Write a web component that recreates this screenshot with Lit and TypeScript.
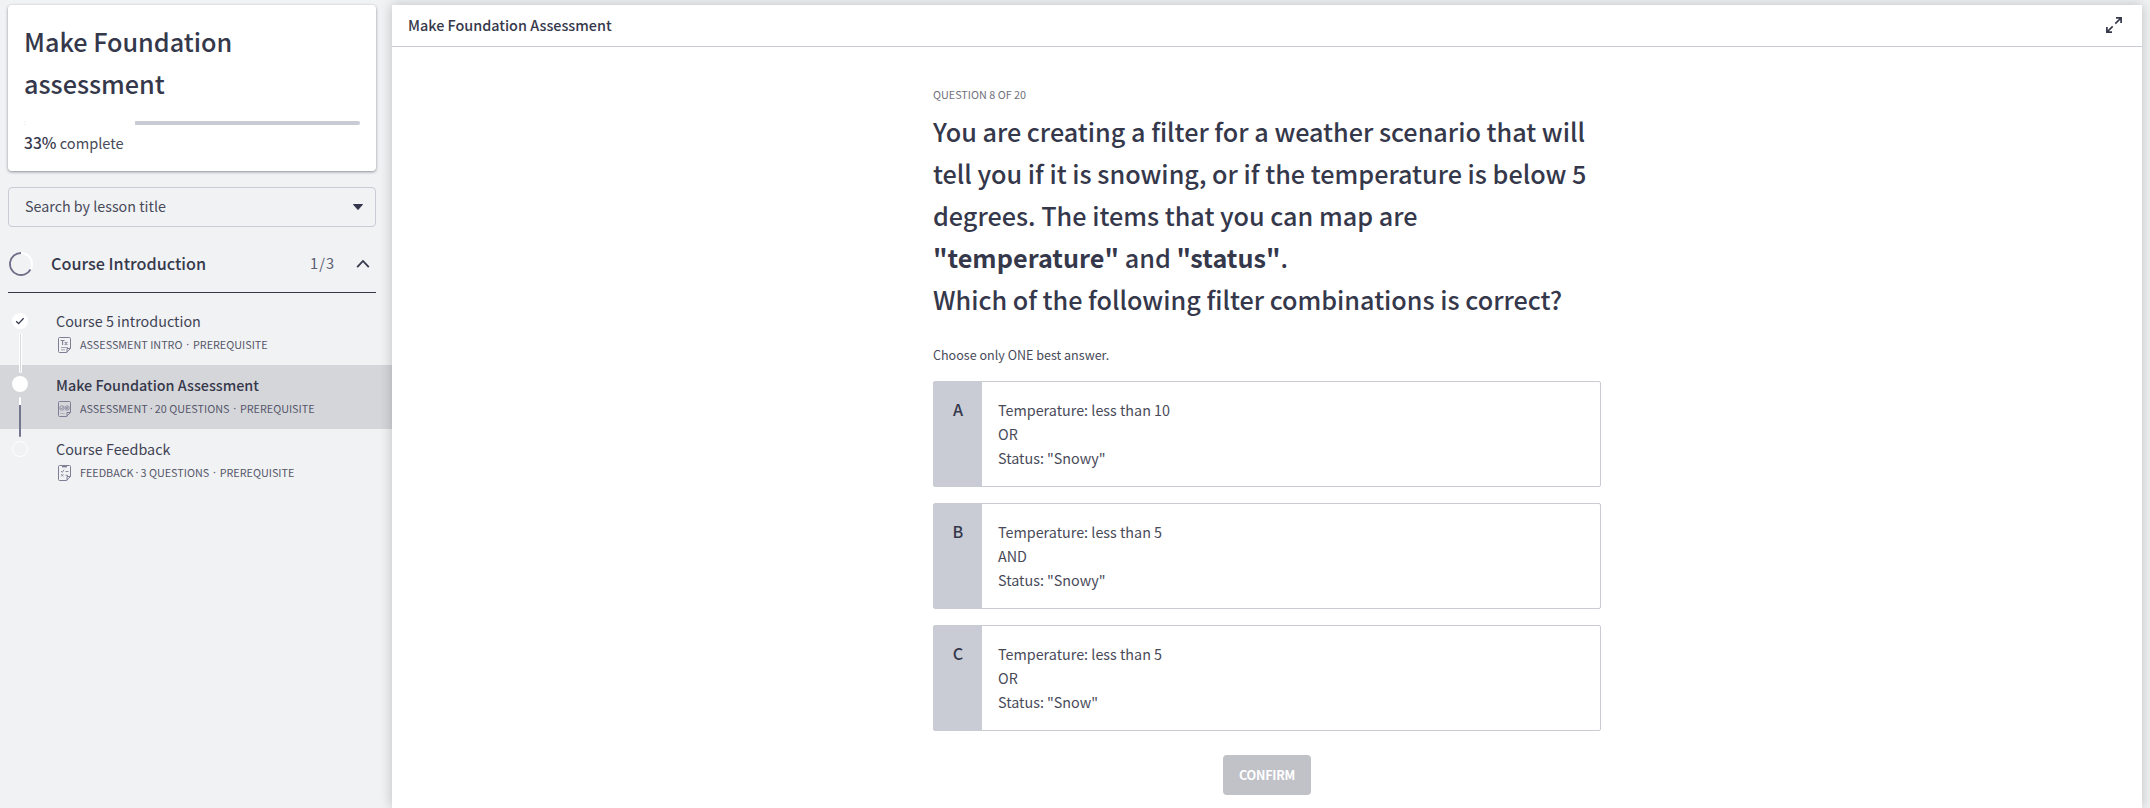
import { LitElement, html, css, svg, nothing } from "lit";
import { customElement, property } from "lit/decorators.js";

type Kind = "text" | "quiz" | "feedback";
type Status = "done" | "current" | "todo";

interface Lesson {
  title: string;
  type: string;
  count?: string;
  kind: Kind;
  status: Status;
}

const LESSONS: Lesson[] = [
  { title: "Course 5 introduction", type: "ASSESSMENT INTRO", kind: "text", status: "done" },
  { title: "Make Foundation Assessment", type: "ASSESSMENT", count: "20 QUESTIONS", kind: "quiz", status: "current" },
  { title: "Course Feedback", type: "FEEDBACK", count: "3 QUESTIONS", kind: "feedback", status: "todo" },
];

const ANSWERS = [
  { letter: "A", lines: ["Temperature: less than 10", "OR", 'Status: "Snowy"'] },
  { letter: "B", lines: ["Temperature: less than 5", "AND", 'Status: "Snowy"'] },
  { letter: "C", lines: ["Temperature: less than 5", "OR", 'Status: "Snow"'] },
];

const page = svg`<path d="M1.5 .5h10a1 1 0 0 1 1 1v10l-4 4h-7a1 1 0 0 1-1-1v-13a1 1 0 0 1 1-1z M12.5 11.5h-3.5v4"/>`;

const glyphs: Record<Kind, unknown> = {
  text: svg`${page}<path d="M2.7 3.5h3.8M4.6 3.5v4.6M6.7 5l2.7 3M9.4 5L6.7 8" stroke-width="1.1"/><path d="M3 10.5h7M3 12.8h4" opacity=".7"/>`,
  quiz: svg`${page}<g stroke-width=".8"><circle cx="3.9" cy="7" r="2.2"/><circle cx="9.1" cy="7" r="2.2"/><path d="M2.7 7l1 1 1.5-2M7.9 6l2.4 2M10.3 6L7.9 8"/></g><path d="M2.5 12.5h4" opacity=".4"/>`,
  feedback: svg`${page}<path d="M4 .2h5v2.2H4z" fill="currentColor" stroke="none"/><path d="M3 6l1.3 1.4L6 4.7M7.5 6.5h3M3.2 9.2l2.2 2.2M5.4 9.2l-2.2 2.2M7.5 10.3h2.6" stroke-width=".9"/>`,
};

@customElement("lesson-row")
class LessonRow extends LitElement {
  @property({ attribute: false }) lesson!: Lesson;

  static styles = css`
    :host { display: block; }
    .row { display: flex; height: 64px; color: #4b4d5f; }
    .row.current { background: #d5d6da; }
    .rail { position: relative; width: 56px; flex: none; padding: 12px 0 0 12px; box-sizing: border-box; }
    .current .rail { padding-top: 11px; }
    .dot { display: flex; width: 16px; height: 16px; border-radius: 50%; background: #fff; box-sizing: border-box; }
    .todo .dot { background: none; border: 1px solid #fff; }
    .link { position: absolute; left: 19px; top: 32px; width: 3px; height: 40px; z-index: 1; box-sizing: border-box; }
    .done .link { background: #d8d9dd; border: 1px solid #fff; border-radius: 1px; }
    .current .link { left: 19px; width: 2px; background: linear-gradient(#fff 8px, #73768c 8px); border-radius: 1px; }
    .title { margin-top: 10px; font-size: 14.35px; line-height: 20px; color: #404254; white-space: nowrap; }
    .current .title { font-weight: 500; color: #36384b; }
    .meta { display: flex; align-items: center; gap: 9px; margin-top: 6px; margin-left: 2px; font-size: 10.8px; line-height: 16px; white-space: nowrap; color: #55576a; }
    .meta svg { color: #7d8094; flex: none; }
    .label { display: flex; margin-top: -2px; }
    .sep { width: 10.5px; text-align: center; font-family: "Noto Sans", sans-serif; }
    .sep.tight { width: 7px; }
    .tick { margin: auto; }
  `;

  render() {
    const l = this.lesson;
    return html`<div class="row ${l.status}">
      <div class="rail">
        <div class="dot">
          ${l.status === "done"
            ? html`<svg class="tick" width="10" height="8" viewBox="0 0 10 8" fill="none" stroke="#33354c" stroke-width="1.3"><path d="M1.2 4.2l2.4 2.4 5-5.4" /></svg>`
            : nothing}
        </div>
        ${l.status === "todo" ? nothing : html`<div class="link"></div>`}
      </div>
      <div>
        <div class="title">${l.title}</div>
        <div class="meta">
          <svg width="13" height="16" viewBox="0 0 13 16" fill="none" stroke="currentColor">${glyphs[l.kind]}</svg>
          <div class="label">
            <span>${l.type}</span>
            ${l.count ? html`<span class="sep tight">·</span><span>${l.count}</span>` : nothing}
            <span class="sep">·</span><span>PREREQUISITE</span>
          </div>
        </div>
      </div>
    </div>`;
  }
}

@customElement("app-root")
class AppRoot extends LitElement {
  static styles = css`
    :host {
      display: flex;
      height: 808px;
      overflow: hidden;
      box-sizing: border-box;
      padding-top: 5px;
      padding-right: 8px;
      background: #f1f2f4;
      color: #35384b;
      font-family: "Noto Sans CJK SC", "Noto Sans", sans-serif;
    }
    .side { width: 392px; flex: none; }
    .card { margin: 0 16px 0 8px; height: 166px; box-sizing: border-box; padding: 15px 16px 0 16px; background: #fff; border-radius: 4px; box-shadow: 0 1px 3px rgba(40, 42, 55, 0.5); }
    .card h1 { margin: 0; font-size: 25.2px; line-height: 42px; font-weight: 500; }
    .bar { height: 4px; margin: 17px 0 0 0; border-radius: 2px; background: #c9cbd5; overflow: hidden; }
    .fill { height: 4px; background: #fff; }
    .done { margin-top: 6px; font-size: 14.6px; line-height: 22px; color: #484a59; }
    .done b { font-weight: 500; font-size: 15.6px; color: #35384b; }
    .search { display: flex; align-items: center; justify-content: space-between; margin: 16px 16px 0 8px; height: 40px; box-sizing: border-box; border: 1px solid #c9cbd5; border-radius: 4px; padding: 0 12px 0 16px; font-size: 14.3px; line-height: 22px; color: #484a59; }
    .search span { margin-top: -2px; }
    .section { display: flex; align-items: center; margin: 11px 16px 8px 8px; height: 55px; box-sizing: border-box; border-bottom: 1px solid #35384b; padding: 0 6px 3px 1px; }
    .section h2 { margin: -2px auto 0 18px; font-size: 16.2px; line-height: 24px; font-weight: 500; }
    .count { margin: -1px 21px 0 0; font-size: 14.6px; line-height: 24px; letter-spacing: 1px; color: #5b5d70; }
    main { flex: 1; background: #fff; box-shadow: 0 0 12px rgba(0, 0, 0, 0.22); z-index: 2; }
    header { display: flex; align-items: center; justify-content: space-between; height: 42px; box-sizing: border-box; padding: 0 20px 2px 16px; border-bottom: 1px solid #c9cbd5; font-size: 14.4px; line-height: 20px; font-weight: 500; }
    .quiz { width: 668px; margin: 0 auto; padding-top: 37px; display: flex; flex-direction: column; }
    .step { font-size: 10.8px; line-height: 20px; color: #6f717b; }
    .question { margin-top: 6px; font-size: 25.2px; line-height: 42px; font-weight: 500; white-space: nowrap; }
    .question b { font-weight: 700; letter-spacing: 0.05px; }
    .hint { margin: 25px 0 16px; font-size: 12.55px; line-height: 20px; color: #484a59; }
    .answer { display: flex; height: 106px; margin-bottom: 16px; box-sizing: border-box; border: 1px solid #c9cbd5; border-radius: 2px; }
    .letter { width: 48px; flex: none; box-sizing: border-box; padding-top: 15px; background: #c9cbd5; text-align: center; font-size: 16.2px; line-height: 24px; font-weight: 500; }
    .lines { padding: 16px; font-size: 14.35px; line-height: 24px; color: #484a59; }
    .confirm { align-self: center; margin-top: 8px; width: 88px; height: 40px; border: 0; border-radius: 4px; padding: 0; background: #c1c2c8; color: #fff; font: 700 12.6px/40px "Noto Sans CJK SC", sans-serif; letter-spacing: -0.25px; }
  `;

  render() {
    return html`
      <aside class="side">
        <div class="card">
          <h1>Make Foundation<br />assessment</h1>
          <div class="bar"><div class="fill" style="width: 33%"></div></div>
          <div class="done"><b>33%</b> complete</div>
        </div>
        <div class="search">
          <span>Search by lesson title</span>
          <svg width="10" height="6" viewBox="0 0 10 6" fill="#35384b"><path d="M.5 0h9a.4.4 0 0 1 .3.7L5.6 5.6a.8.8 0 0 1-1.2 0L.2.7A.4.4 0 0 1 .5 0z" /></svg>
        </div>
        <div class="section">
          <svg width="24" height="24" viewBox="0 0 24 24" fill="none" stroke-width="1.9">
            <circle cx="12" cy="12" r="11" stroke="#fff" />
            <path d="M21.5 17.5A11 11 0 1 1 12 1" stroke="#6d7088" />
          </svg>
          <h2>Course Introduction</h2>
          <span class="count">1/3</span>
          <svg width="14" height="10" viewBox="0 0 14 10" fill="none" stroke="#35384b" stroke-width="1.8"><path d="M1.2 8.2L7 2l5.8 6.2" /></svg>
        </div>
        ${LESSONS.map((l) => html`<lesson-row .lesson=${l}></lesson-row>`)}
      </aside>
      <main>
        <header>
          <span>Make Foundation Assessment</span>
          <svg width="16" height="16" viewBox="0 0 16 16" fill="none" stroke="#35384b" stroke-width="1.7"><path d="M9.3 6.7L15 1M10 .9h5.1V6M6.7 9.3L1 15M.9 10v5.1H6" /></svg>
        </header>
        <section class="quiz">
          <div class="step">QUESTION 8 OF 20</div>
          <div class="question">
            You are creating a filter for a weather scenario that will<br />tell you if it is snowing, or if the temperature is below 5<br />degrees. The items that you can map are<br /><b>"temperature"</b> and <b>"status"</b>.<br />Which of the following filter combinations is correct?
          </div>
          <div class="hint">Choose only ONE best answer.</div>
          ${ANSWERS.map(
            (a) => html`<div class="answer">
              <div class="letter">${a.letter}</div>
              <div class="lines">${a.lines.map((t) => html`<div>${t}</div>`)}</div>
            </div>`
          )}
          <button class="confirm">CONFIRM</button>
        </section>
      </main>
    `;
  }
}
